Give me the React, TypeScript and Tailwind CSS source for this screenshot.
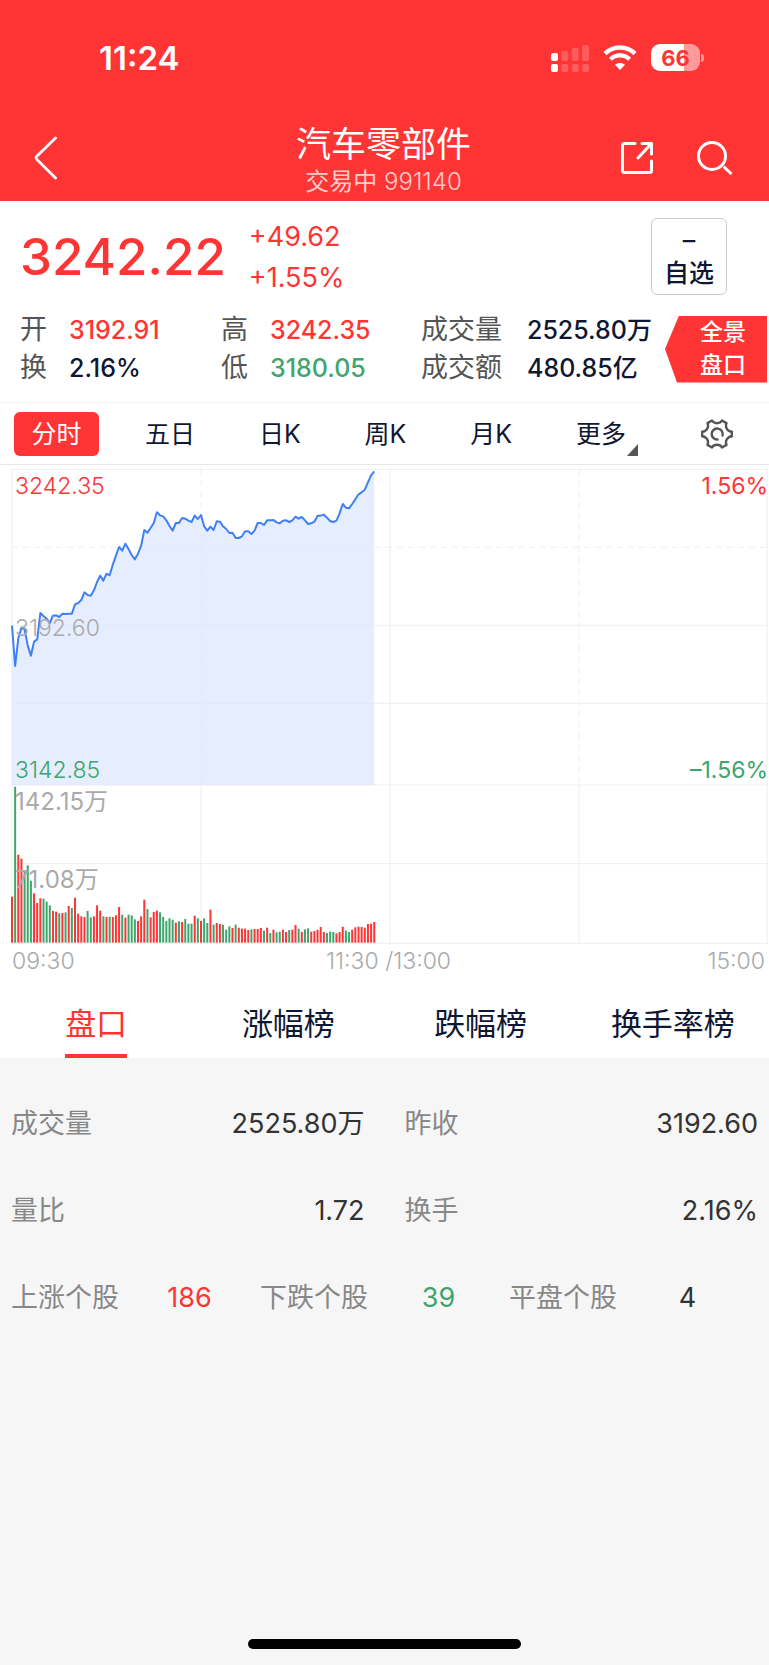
import { clsx } from 'clsx';

const X_STEP = 9.45;

// Minute-by-minute line, vertical positions inside the price plot (27 is the top edge, 975 the bottom)
const priceTrack = [
  497, 618, 535, 503, 507, 557, 587, 545, 538, 459, 468, 476, 489, 467, 466, 471, 461, 462, 461, 461,
  433, 429, 420, 397, 405, 407, 391, 366, 347, 362, 341, 346, 314, 287, 261, 272, 251, 267, 285, 298,
  281, 257, 210, 218, 204, 189, 157, 166, 169, 181, 198, 212, 189, 189, 174, 176, 182, 186, 167, 177,
  165, 199, 212, 200, 210, 184, 185, 199, 207, 219, 218, 234, 234, 229, 214, 214, 222, 212, 189, 189,
  195, 181, 181, 180, 187, 190, 182, 181, 186, 181, 170, 176, 171, 181, 192, 190, 185, 167, 167, 164,
  173, 183, 186, 182, 160, 132, 143, 145, 132, 118, 103, 97, 89, 67, 46, 34,
];

// Tops of the volume bars (16 is the top edge, 489 the base line)
const volumeTops = [
  351, 21, 225, 237, 271, 257, 303, 341, 370, 356, 357, 366, 377, 394, 396, 401, 400, 398, 379, 385,
  354, 402, 410, 412, 394, 413, 410, 377, 393, 410, 412, 411, 412, 407, 382, 405, 414, 405, 407, 419,
  424, 410, 360, 388, 413, 397, 393, 398, 412, 424, 416, 420, 429, 425, 427, 418, 432, 432, 408, 416,
  424, 416, 430, 390, 435, 430, 433, 435, 450, 440, 445, 435, 444, 447, 447, 451, 449, 448, 448, 445,
  453, 444, 460, 450, 458, 456, 450, 457, 451, 450, 436, 447, 457, 449, 446, 456, 454, 450, 442, 457,
  460, 456, 457, 461, 457, 441, 453, 457, 450, 443, 441, 442, 444, 433, 432, 427,
];

// r = up minute, g = down minute
const volumeDirections =
  'rgrrgggrrrgggrrgrgrg' +
  'rrrrggrrrgrgrrrgrggg' +
  'rrrgrrrgggggrgrgggrg' +
  'rggrgrrgggrgrrrrgrrr' +
  'grgrggrrgrrgrggrrrrr' +
  'gggrrrggrrrrrrrr';

const linePoints = priceTrack.map((y, i) => `${(i * X_STEP).toFixed(2)},${y}`).join(' ');
const lastX = ((priceTrack.length - 1) * X_STEP).toFixed(2);

const quotes = [
  { label: '成交量', value: '2525.80万' },
  { label: '昨收', value: '3192.60' },
  { label: '量比', value: '1.72' },
  { label: '换手', value: '2.16%' },
];

const breadth = [
  { label: '上涨个股', value: '186', color: 'text-[#ff3434]' },
  { label: '下跌个股', value: '39', color: 'text-[#3da56d]' },
  { label: '平盘个股', value: '4', color: 'text-[#333333]' },
];

const periods = ['五日', '日K', '周K', '月K'];
const boards = ['盘口', '涨幅榜', '跌幅榜', '换手率榜'];

function StatusBar() {
  return (
    <div className="flex h-[115px] items-center justify-between pl-[99px] pr-[65px]">
      <span className="text-[33px] leading-10 font-semibold">11:24</span>
      <div className="flex items-center gap-[14px]">
        <svg width="38" height="28" viewBox="0 0 38 28" fill="white" aria-hidden="true">
          <rect x="0" y="9" width="7" height="8" rx="2" />
          <rect x="0" y="20" width="7" height="8" rx="2" />
          <g opacity="0.2">
            <rect x="10.3" y="7" width="7" height="10" rx="2" />
            <rect x="20.7" y="4" width="7" height="13" rx="2" />
            <rect x="31" y="1" width="7" height="16" rx="2" />
            <rect x="10.3" y="20" width="7" height="8" rx="2" />
            <rect x="20.7" y="20" width="7" height="8" rx="2" />
            <rect x="31" y="20" width="7" height="8" rx="2" />
          </g>
        </svg>
        <svg width="34" height="26" viewBox="0 0 34 26" fill="none" stroke="white" aria-hidden="true">
          <path d="M2 8.6C10.4.5 23.6.5 32 8.6" strokeWidth="4.4" />
          <path d="M7.4 14.2c5.4-5.1 13.8-5.1 19.2 0" strokeWidth="4.2" />
          <path d="M17 25l-5-5.2c2.8-2.5 7.2-2.5 10 0z" fill="white" stroke="none" />
        </svg>
        <div className="flex items-center gap-px">
          <span className="flex h-[27px] w-[49px] items-center justify-center rounded-[9px] bg-linear-to-r from-white from-67% to-white/50 to-67% text-[22px] leading-7 font-bold text-[#ff3434]">
            66
          </span>
          <span className="h-2 w-[3px] rounded-r-full bg-white/50" />
        </div>
      </div>
    </div>
  );
}

function NavBar() {
  return (
    <div className="grid h-[86px] grid-cols-[1fr_auto_1fr] items-center pr-[36px] pl-[34px]">
      <button type="button" aria-label="返回" className="justify-self-start">
        <svg width="24" height="44" viewBox="0 0 24 44" fill="none" stroke="white" strokeWidth="2.8" strokeLinecap="round">
          <path d="M21.5 2 2.8 20.2q-1.4 1.6 0 3.2L21.5 42" />
        </svg>
      </button>
      <div className="flex flex-col items-center pt-2">
        <h1 className="text-[35px] leading-[39px]">汽车零部件</h1>
        <p className="text-[24px] leading-9 text-white/75">
          交易中 <span className="font-light">991140</span>
        </p>
      </div>
      <div className="flex items-center gap-[42px] justify-self-end">
        <button type="button" aria-label="分享">
          <svg width="34" height="34" viewBox="0 0 34 34" fill="none" stroke="white" strokeWidth="3" strokeLinecap="round">
            <path d="M15 2.5H4.5a2 2 0 0 0-2 2v25a2 2 0 0 0 2 2h25a2 2 0 0 0 2-2V20" />
            <path d="M22 2.5h9.5V13M30.5 3.5 18 17" strokeLinejoin="round" />
          </svg>
        </button>
        <button type="button" aria-label="搜索">
          <svg width="37" height="36" viewBox="0 0 37 36" fill="none" stroke="white" strokeWidth="3">
            <circle cx="16" cy="16" r="13.5" />
            <path d="M27.5 26.5 35.5 34" />
          </svg>
        </button>
      </div>
    </div>
  );
}

function Summary() {
  return (
    <section className="flex flex-col border-b border-[#f3f3f3] pb-[15px] text-[25px] text-[#0f1733]">
      <div className="flex h-[107px] items-center pt-1 pr-[42px] pl-5">
        <strong className="text-[51px] leading-[60px] font-medium text-[#ff3434]">3242.22</strong>
        <div className="ml-[23px] flex flex-col text-[27px] leading-[41px] text-[#ff3434]">
          <span>+49.62</span>
          <span>+1.55%</span>
        </div>
        <button
          type="button"
          className="ml-auto flex h-[77px] w-[76px] flex-col items-center justify-center rounded-md border border-[#cccccc] text-[25px] leading-[33px] font-medium"
        >
          <span>–</span>
          <span>自选</span>
        </button>
      </div>
      <div className="flex items-center justify-between pt-[3px] pr-[2px] pl-5">
        <dl className="grid grid-cols-[49px_152px_49px_151px_106px_auto] leading-[38px] font-medium">
          <dt className="text-[27px] font-normal text-[#555555]">开</dt>
          <dd className="text-[#ff3434]">3192.91</dd>
          <dt className="text-[27px] font-normal text-[#555555]">高</dt>
          <dd className="text-[#ff3434]">3242.35</dd>
          <dt className="text-[27px] font-normal text-[#555555]">成交量</dt>
          <dd>2525.80万</dd>
          <dt className="text-[27px] font-normal text-[#555555]">换</dt>
          <dd>2.16%</dd>
          <dt className="text-[27px] font-normal text-[#555555]">低</dt>
          <dd className="text-[#3da56d]">3180.05</dd>
          <dt className="text-[27px] font-normal text-[#555555]">成交额</dt>
          <dd>480.85亿</dd>
        </dl>
        <button
          type="button"
          className="h-[67px] w-[102px] shrink-0 bg-[#ff3434] pl-[14px] text-[23px] leading-[33px] font-medium text-white [clip-path:polygon(14px_0,100%_0,100%_100%,12px_100%,0_50%)]"
        >
          全景
          <br />
          盘口
        </button>
      </div>
    </section>
  );
}

function PeriodTabs() {
  return (
    <nav className="flex h-[62px] items-center border-b border-[#e8e8e8] pr-9 pl-[14px] text-[25px] leading-8 text-[#0f1733]">
      <button type="button" className="h-11 w-[85px] rounded-md bg-[#ff3434] text-white">
        分时
      </button>
      <div className="mr-[75px] ml-[46px] flex flex-1 justify-between">
        {periods.map((period) => (
          <button key={period} type="button">
            {period}
          </button>
        ))}
        <button type="button" className="relative">
          更多
          <svg className="absolute -right-3 -bottom-1.5" width="11" height="12" viewBox="0 0 11 12" aria-hidden="true">
            <path d="M11 0v12H0z" fill="#555555" />
          </svg>
        </button>
      </div>
      <button type="button" aria-label="设置">
        <svg width="32" height="30" viewBox="0 0 32 30" fill="none" stroke="#555555" strokeWidth="2.4" strokeLinecap="round" strokeLinejoin="round">
          <path d="M11 1.5q1.5 2.7 5 2.7t5-2.7l4.5 2.6q-1.3 3 .4 5.7t5 3v4.4q-3.3.3-5 3t-.4 5.7L21 28.5q-1.5-2.7-5-2.7t-5 2.7l-4.5-2.6q1.3-3-.4-5.7t-5-3v-4.4q3.3-.3 5-3t.4-5.7z" />
          <path d="M16.5 20.5a5.5 5.5 0 1 1 5-4" />
        </svg>
      </button>
    </nav>
  );
}

function PriceChart() {
  return (
    <div className="relative h-[316px] text-[23px] leading-7">
      <svg className="block size-full overflow-visible" viewBox="0 27 2268 948" preserveAspectRatio="none" aria-hidden="true">
        <g stroke="#eeeeee" strokeWidth="1">
          <path d="M0 28H2268M0 496H2268M0 730H2268M0 975H2268M0 27V975M1134 27V975M2265 27V975" fill="none" vectorEffect="non-scaling-stroke" />
          <path d="M0 262H2268M567 27V975M1701 27V975" fill="none" strokeDasharray="6 5" vectorEffect="non-scaling-stroke" />
        </g>
        <polygon points={`0,975 ${linePoints} ${lastX},975`} fill="#dce6ff" fillOpacity="0.7" />
        <polyline points={linePoints} fill="none" stroke="#3f80f5" strokeWidth="2" strokeLinejoin="round" vectorEffect="non-scaling-stroke" />
      </svg>
      <div className="absolute inset-0 flex flex-col justify-between pt-[3px] pb-px pl-[3px]">
        <div className="flex justify-between text-[#ff3434]">
          <span className="font-light">3242.35</span>
          <span>1.56%</span>
        </div>
        <span className="font-light text-[#aaaaaa]">3192.60</span>
        <div className="flex justify-between text-[#3da56d]">
          <span className="font-light">3142.85</span>
          <span>–1.56%</span>
        </div>
      </div>
    </div>
  );
}

function VolumeChart() {
  return (
    <div className="relative h-[158px] text-[24px] leading-7 text-[#aaaaaa]">
      <svg className="block size-full overflow-visible" viewBox="0 16 2268 474" preserveAspectRatio="none" aria-hidden="true">
        <path
          d="M0 252H2268M0 491H2268M0 16V491M567 16V491M1134 16V491M1701 16V491M2265 16V491"
          fill="none"
          stroke="#eeeeee"
          strokeWidth="1"
          vectorEffect="non-scaling-stroke"
        />
        {volumeTops.map((top, i) => (
          <rect
            key={i}
            x={i * X_STEP - 3}
            y={top}
            width="6"
            height={489 - top}
            fill={volumeDirections[i] === 'r' ? '#ff3434' : '#3da56d'}
          />
        ))}
      </svg>
      <div className="absolute inset-0 flex flex-col pt-[3px] pl-[3px]">
        <span className="h-[78px]">142.15万</span>
        <span>71.08万</span>
      </div>
    </div>
  );
}

export default function App() {
  return (
    <div className="flex min-h-screen flex-col bg-[#f6f6f6] font-[Inter,'Noto_Sans_CJK_SC',sans-serif]">
      <header className="bg-[#ff3434] text-white">
        <StatusBar />
        <NavBar />
      </header>

      <main className="bg-white">
        <Summary />
        <PeriodTabs />
        <section className="pt-1 pr-px pl-3">
          <PriceChart />
          <VolumeChart />
          <div className="grid h-9 grid-cols-[1fr_auto_1fr] items-center pr-[3px] text-[23px] leading-7 font-light text-[#aaaaaa]">
            <span>09:30</span>
            <span>11:30 /13:00</span>
            <span className="text-right">15:00</span>
          </div>
        </section>
        <nav className="grid h-[79px] grid-cols-4 text-[31px] leading-10 text-[#0f1733]">
          {boards.map((board, i) => (
            <button
              key={board}
              type="button"
              className={clsx(
                'flex flex-col items-center justify-end justify-self-center border-b-4 pb-[10px]',
                i === 0 ? 'border-[#ff3434] text-[#ff3434]' : 'border-transparent',
              )}
            >
              {board}
            </button>
          ))}
        </nav>
      </main>

      <section className="px-[11px] pt-[22px] text-[27px] leading-[87px]">
        <dl className="grid grid-cols-2 gap-x-10">
          {quotes.map(({ label, value }) => (
            <div key={label} className="flex justify-between">
              <dt className="text-[#888888]">{label}</dt>
              <dd className="text-[#333333]">{value}</dd>
            </div>
          ))}
        </dl>
        <dl className="grid grid-cols-3">
          {breadth.map(({ label, value, color }) => (
            <div key={label} className="flex">
              <dt className="text-[#888888]">{label}</dt>
              <dd className={clsx('flex-1 text-center', color)}>{value}</dd>
            </div>
          ))}
        </dl>
      </section>

      <div className="mx-auto mt-auto mb-4 h-[10px] w-[273px] rounded-full bg-black" />
    </div>
  );
}
